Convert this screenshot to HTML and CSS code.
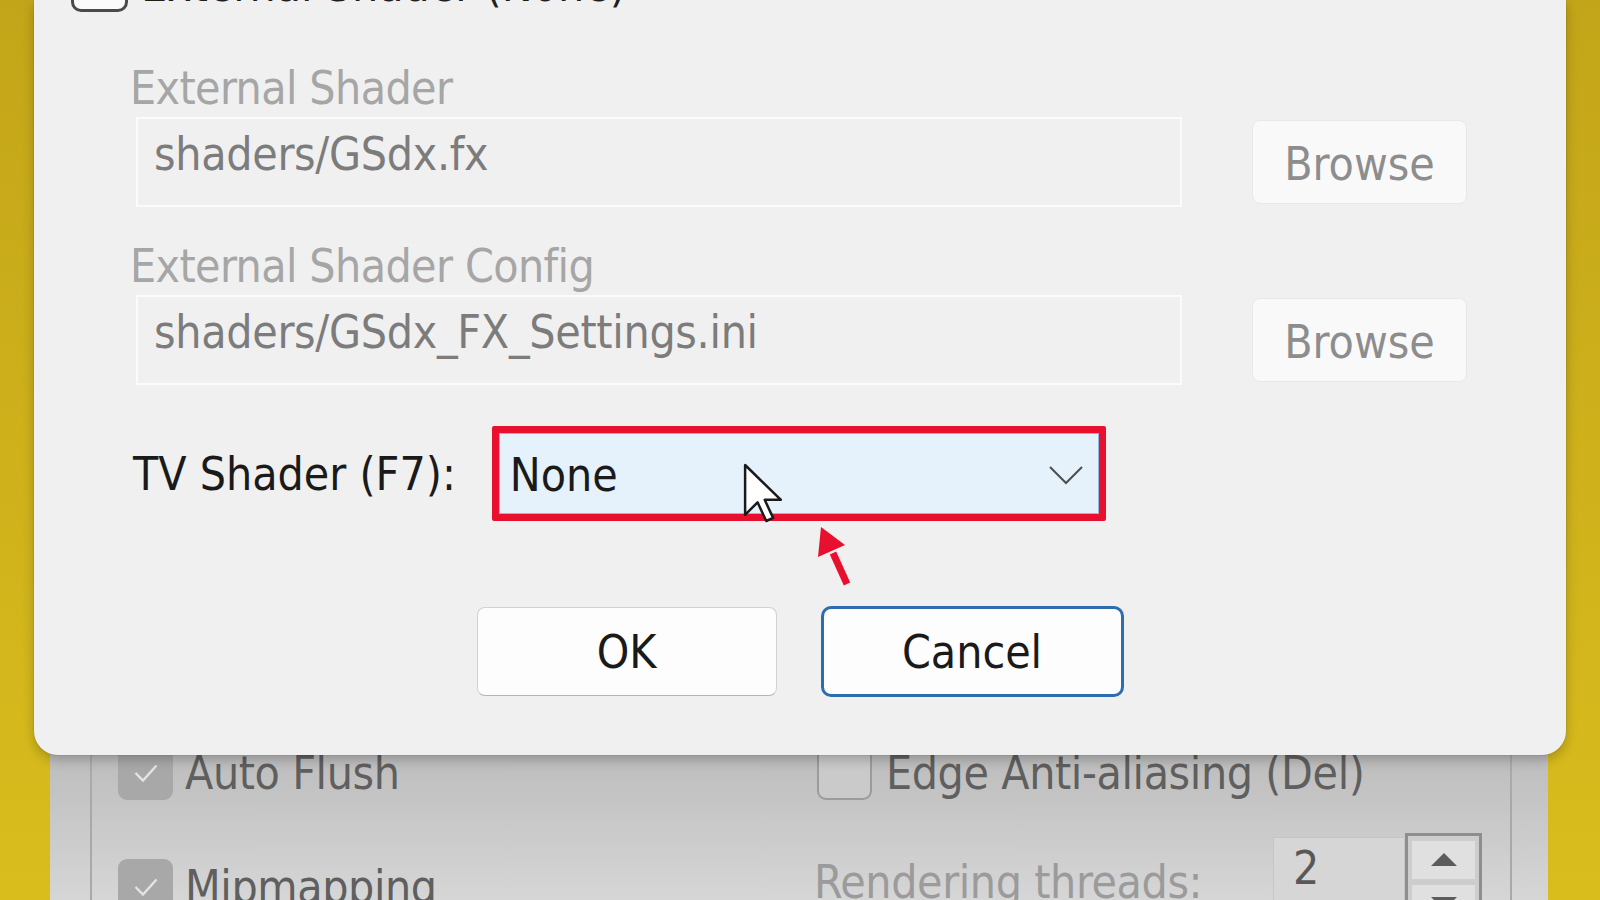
FILE: index.html
```html
<!DOCTYPE html>
<html lang="en">
<head>
  <meta charset="UTF-8">
  <meta name="viewport" content="width=device-width, initial-scale=1.0">
  <title>Shader Configuration</title>
  <link rel="stylesheet" href="styles.css">
</head>
<body>
  <div class="desktop">

    <!-- settings window behind the dialog (dimmed) -->
    <div class="parent-window">
      <div class="group">
        <div class="option">
          <span class="box checked">
            <svg viewBox="0 0 20 20" width="30" height="30"><polyline points="3,10 8,15 17,5" fill="none" stroke="#e4e4e4" stroke-width="1.6"/></svg>
          </span>
          <span>Auto Flush</span>
        </div>
        <div class="option option-right">
          <span class="box"></span>
          <span>Edge Anti-aliasing (Del)</span>
        </div>
        <div class="option">
          <span class="box checked">
            <svg viewBox="0 0 20 20" width="30" height="30"><polyline points="3,10 8,15 17,5" fill="none" stroke="#e4e4e4" stroke-width="1.6"/></svg>
          </span>
          <span>Mipmapping</span>
        </div>
        <div class="threads">
          <span class="threads-label">Rendering threads:</span>
          <div class="spin">
            <div class="spin-input">2</div>
            <div class="spin-buttons">
              <span class="spin-btn"><i class="tri-up"></i></span>
              <span class="spin-btn"><i class="tri-down"></i></span>
            </div>
          </div>
        </div>
      </div>
    </div>

    <!-- shader dialog -->
    <div class="dialog">
      <div class="check-row">
        <span class="check-box"></span>
        <span>External Shader (None)</span>
      </div>

      <div class="path-group">
        <div class="path-label">External Shader</div>
        <div class="path-row">
          <div class="path-field">shaders/GSdx.fx</div>
          <button class="browse">Browse</button>
        </div>
      </div>

      <div class="path-group">
        <div class="path-label">External Shader Config</div>
        <div class="path-row">
          <div class="path-field">shaders/GSdx_FX_Settings.ini</div>
          <button class="browse">Browse</button>
        </div>
      </div>

      <div class="tv-row">
        <span>TV Shader (F7):</span>
        <div class="highlight">
          <div class="combo">
            <span>None</span>
            <svg class="chevron" viewBox="0 0 36 22" width="36" height="22"><polyline points="2,3 18,19 34,3" fill="none" stroke="#4d4d4d" stroke-width="2"/></svg>
          </div>
        </div>
      </div>

      <div class="actions">
        <button class="btn">OK</button>
        <button class="btn btn-default">Cancel</button>
      </div>
    </div>

    <!-- mouse pointer -->
    <svg class="pointer" viewBox="0 0 13.5 20" width="42" height="64">
      <path d="M1 1 L1 17 L5 13 L7.8 19 L10 18 L7.3 12.2 L12.5 12.2 Z" fill="#fff" stroke="#1a1a1a" stroke-width="0.8" stroke-linejoin="round"/>
    </svg>

    <!-- annotation arrow -->
    <svg class="annotation" viewBox="800 520 60 70" width="60" height="70">
      <line x1="847" y1="584" x2="833" y2="553" stroke="#e8102e" stroke-width="7"/>
      <polygon points="821,527 845,545 818,557" fill="#e8102e"/>
    </svg>

  </div>
</body>
</html>
```

FILE: styles.css
```css
/* General */
* {
  box-sizing: border-box;
}

body {
  margin: 0;
  width: 1600px;
  height: 900px;
  overflow: hidden;
  background: linear-gradient(to bottom, #c3a519, #d9bd1d);
  font-family: "DejaVu Sans Condensed", "DejaVu Sans", sans-serif;
  font-stretch: condensed;
  font-size: 46px;
  line-height: 56px;
}

.desktop {
  position: relative;
  width: 1600px;
  height: 900px;
}

/* Dialog */
.dialog {
  position: absolute;
  left: 34px;
  top: 0;
  width: 1532px;
  height: 755px;
  padding: 0 99px 0 96px;
  background: #f0f0f0;
  border-radius: 0 0 24px 24px;
  box-shadow: 0 5px 12px rgba(0, 0, 0, 0.22), 0 0 0 1px rgba(0, 0, 0, 0.05);
}

.check-row {
  display: flex;
  align-items: center;
  gap: 13px;
  height: 54px;
  margin: -42px 0 0 -59px;
  color: #1e1e1e;
}

.check-box {
  width: 57px;
  height: 54px;
  border: 3px solid #4a4a4a;
  border-radius: 10px;
  background: #fbfbfb;
}

.path-group {
  margin-top: 48px;
}

.path-group + .path-group {
  margin-top: 31px;
}

.path-label {
  color: #a6a6a6;
  letter-spacing: -0.6px;
}

.path-row {
  display: grid;
  grid-template-columns: 1046px 215px;
  column-gap: 70px;
  align-items: center;
  margin: 1px 0 0 6px;
}

.path-field {
  height: 90px;
  padding: 7px 16px;
  border: 2px solid #fbfbfb;
  color: #7c7c7c;
  white-space: nowrap;
  letter-spacing: -0.3px;
}

.browse {
  height: 84px;
  padding: 4px 0 0;
  border: 1px solid #e8e8e8;
  border-radius: 8px;
  background: #f9f9f9;
  color: #8d8d8d;
  font: inherit;
}

/* TV shader combo */
.tv-row {
  display: flex;
  align-items: center;
  gap: 36px;
  margin: 41px 0 0 3px;
  color: #1a1a1a;
}

.highlight {
  width: 614px;
  height: 95px;
  border: 7px solid #e8102e;
  border-radius: 2px;
}

.combo {
  display: flex;
  align-items: center;
  justify-content: space-between;
  height: 100%;
  padding: 2px 14px 0 10px;
  border: 1px solid #8dbbe6;
  background: #e5f1fb;
}

/* Buttons */
.actions {
  display: flex;
  justify-content: center;
  align-items: center;
  gap: 44px;
  margin: 85px -99px 0 -96px;
}

.btn {
  width: 300px;
  height: 89px;
  border: 1px solid #d2d2d2;
  border-bottom-color: #b4b4b4;
  border-radius: 8px;
  background: #fdfdfd;
  color: #1a1a1a;
  font: inherit;
}

.btn-default {
  width: 303px;
  height: 91px;
  border: 3px solid #2d6cae;
  border-radius: 10px;
}

/* Overlays */
.pointer {
  position: absolute;
  left: 742px;
  top: 461px;
}

.annotation {
  position: absolute;
  left: 800px;
  top: 520px;
}

/* Window behind the dialog */
.parent-window {
  position: absolute;
  left: 50px;
  top: 700px;
  width: 1498px;
  height: 240px;
  background: linear-gradient(to bottom, #bcbcbc 50px, #d6d6d6 200px);
  color: #5f5f5f;
}

.group {
  display: grid;
  grid-template-columns: 696px 1fr;
  grid-template-rows: 55px 55px;
  row-gap: 59px;
  align-items: center;
  width: 1422px;
  height: 100%;
  margin-left: 40px;
  padding: 45px 28px 0 26px;
  border-left: 2px solid #a9a9a9;
  border-right: 2px solid #a9a9a9;
}

.option {
  display: flex;
  align-items: center;
  gap: 12px;
  letter-spacing: -0.4px;
}

.option-right {
  gap: 14px;
  margin-left: 3px;
}

.box {
  display: flex;
  align-items: center;
  justify-content: center;
  width: 55px;
  height: 55px;
  border: 2px solid #9c9c9c;
  border-radius: 9px;
  background: #cacaca;
}

.box.checked {
  border-color: #a8a8a8;
  background: #a8a8a8;
}

.threads {
  display: flex;
  align-items: center;
  justify-content: space-between;
  color: #9b9b9b;
}

.threads-label {
  margin-bottom: 10px;
  letter-spacing: -0.4px;
}

.spin {
  display: flex;
  align-items: flex-start;
  height: 100px;
}

.spin-input {
  width: 132px;
  height: 100px;
  padding: 2px 0 0 19px;
  border: 1px solid #c6c6c6;
  background: #d6d6d6;
  color: #585858;
}

.spin-buttons {
  display: flex;
  flex-direction: column;
  gap: 6px;
  width: 77px;
  height: 110px;
  margin-top: -4px;
  padding: 5px 4px 0;
  border: 3px solid #8e8e8e;
  border-bottom: none;
  background: #cdcdcd;
}

.spin-btn {
  display: flex;
  align-items: center;
  justify-content: center;
  height: 38px;
  background: #e0e0e0;
}

.tri-up {
  border-left: 13px solid transparent;
  border-right: 13px solid transparent;
  border-bottom: 13px solid #5c5c5c;
}

.tri-down {
  border-left: 13px solid transparent;
  border-right: 13px solid transparent;
  border-top: 13px solid #5c5c5c;
}
```
